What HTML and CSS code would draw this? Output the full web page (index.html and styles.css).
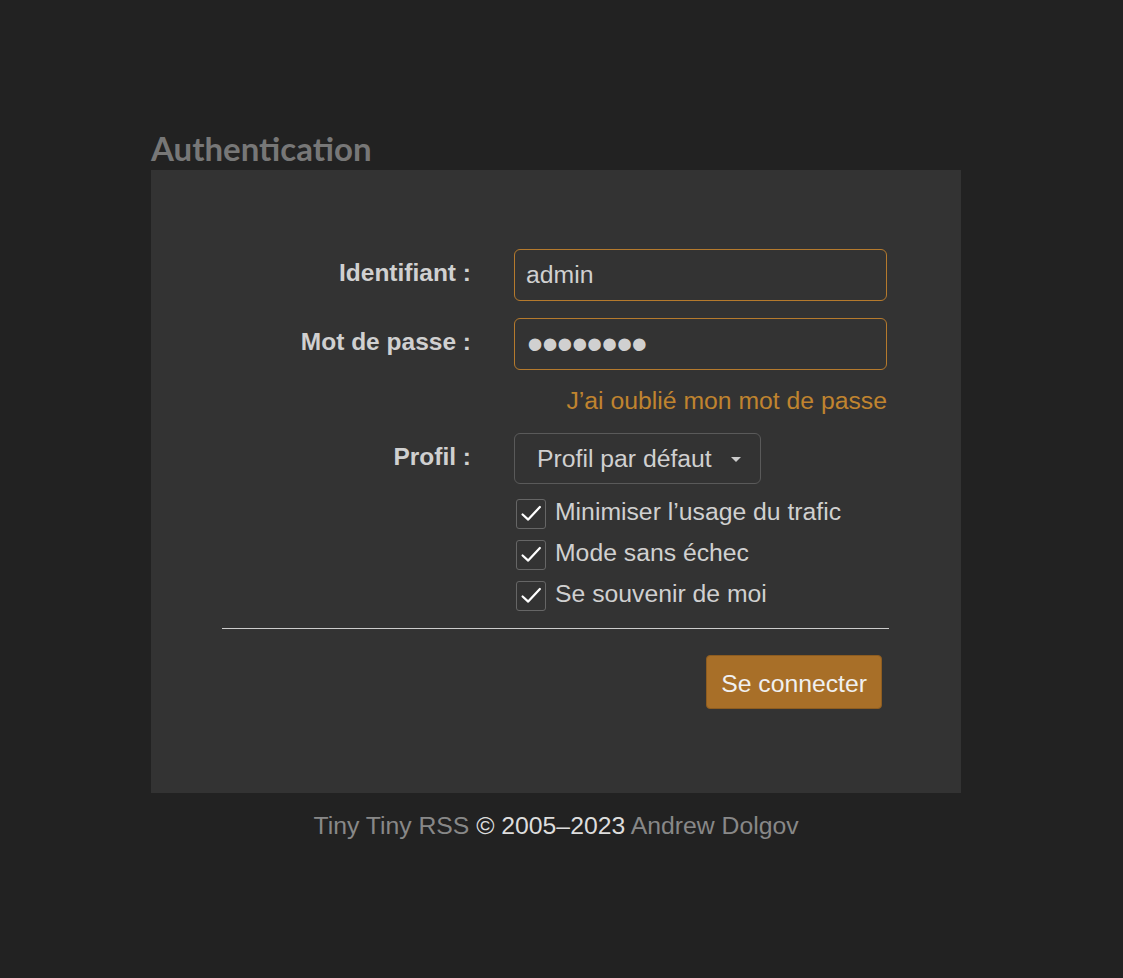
FILE: index.html
```html
<!DOCTYPE html>
<html lang="fr">
<head>
<meta charset="utf-8">
<title>Tiny Tiny RSS : Connexion</title>
<link rel="stylesheet" href="styles.css">
</head>
<body>
<div class="container">
  <h1 class="title">Authentication</h1>
  <div class="panel">
    <form class="login-form">
      <div class="row">
        <label class="label" for="login">Identifiant :</label>
        <input class="text-input" id="login" type="text" value="admin">
      </div>
      <div class="row row-pass">
        <label class="label" for="password">Mot de passe :</label>
        <input class="text-input password" id="password" type="password" value="password">
      </div>
      <div class="row row-link">
        <span></span>
        <a class="forgot" href="#">J’ai oublié mon mot de passe</a>
      </div>
      <div class="row row-profile">
        <label class="label">Profil :</label>
        <div class="select-wrap">
          <div class="select">
            <span>Profil par défaut</span>
            <svg class="caret" width="12" height="7" viewBox="0 0 12 7"><path d="M1 1 L6 6 L11 1 Z" fill="#cccccc"/></svg>
          </div>
        </div>
      </div>
      <div class="row row-checks">
        <span></span>
        <div class="checks">
          <label class="check">
            <span class="box"><svg width="30" height="30" viewBox="0 0 30 30"><path d="M6 15.5 L12 21 L24.5 7.5" fill="none" stroke="#ffffff" stroke-width="2.4" stroke-linecap="round" stroke-linejoin="round"/></svg></span>
            <span class="check-text">Minimiser l’usage du trafic</span>
          </label>
          <label class="check">
            <span class="box"><svg width="30" height="30" viewBox="0 0 30 30"><path d="M6 15.5 L12 21 L24.5 7.5" fill="none" stroke="#ffffff" stroke-width="2.4" stroke-linecap="round" stroke-linejoin="round"/></svg></span>
            <span class="check-text">Mode sans échec</span>
          </label>
          <label class="check">
            <span class="box"><svg width="30" height="30" viewBox="0 0 30 30"><path d="M6 15.5 L12 21 L24.5 7.5" fill="none" stroke="#ffffff" stroke-width="2.4" stroke-linecap="round" stroke-linejoin="round"/></svg></span>
            <span class="check-text">Se souvenir de moi</span>
          </label>
        </div>
      </div>
      <hr class="divider">
      <div class="actions">
        <button class="submit" type="button">Se connecter</button>
      </div>
    </form>
  </div>
  <div class="footer">
    <a class="footer-link" href="#">Tiny Tiny RSS</a>
    <span class="copy">© 2005–2023</span>
    <a class="footer-link" href="#">Andrew Dolgov</a>
  </div>
</div>
</body>
</html>
```

FILE: styles.css
```css
html, body {
  margin: 0;
  padding: 0;
  background: #222222;
}

body {
  font-family: "Liberation Sans", Arial, sans-serif;
  font-size: 24.75px;
  color: #cccccc;
}

.container {
  width: 810px;
  margin-left: 151px;
  padding-top: 130px;
}

.title {
  margin: 0 0 3px 0;
  font-family: Lato, "Open Sans", sans-serif;
  font-weight: 700;
  font-size: 33px;
  line-height: 37px;
  color: #777777;
}

.panel {
  background: #333333;
  padding: 79px 72px 84px 71px;
}

.login-form {
  display: flex;
  flex-direction: column;
}

.row {
  display: grid;
  grid-template-columns: 249px 373px;
  column-gap: 43px;
  align-items: start;
}

.row-pass { margin-top: 17px; }
.row-link { margin-top: 17px; }
.row-profile { margin-top: 18px; }
.row-checks { margin-top: 15px; }

.label {
  text-align: right;
  font-weight: 700;
  font-size: 24.5px;
  line-height: 28px;
  padding-top: 10px;
  color: #d0d0d0;
}

.text-input {
  box-sizing: border-box;
  width: 373px;
  height: 52px;
  margin: 0;
  padding: 0 11px;
  border: 1px solid #b57a2d;
  border-radius: 6px;
  background: #333333;
  color: #d0d0d0;
  font-family: "Liberation Sans", Arial, sans-serif;
  font-size: 24.75px;
  outline: none;
}

.text-input.password {
  font-size: 46px;
  letter-spacing: -1.2px;
  padding-left: 12px;
}

.forgot {
  justify-self: end;
  color: #c0842f;
  text-decoration: none;
  font-size: 24.75px;
  line-height: 28px;
}

.select-wrap {
  display: flex;
}

.select {
  box-sizing: border-box;
  height: 51px;
  display: flex;
  align-items: center;
  gap: 18px;
  padding: 0 18px 0 22px;
  border: 1px solid #5a5a5a;
  border-radius: 6px;
  color: #d0d0d0;
  font-size: 24.75px;
}

.caret {
  display: block;
  margin-top: 2px;
}

.checks {
  display: flex;
  flex-direction: column;
  gap: 11px;
}

.check {
  display: flex;
  align-items: center;
  gap: 9px;
  height: 30px;
  padding-left: 2px;
  color: #d0d0d0;
  font-size: 24.75px;
  line-height: 28px;
}

.check-text {
  padding-bottom: 5px;
}

.box {
  box-sizing: border-box;
  width: 30px;
  height: 30px;
  border: 1px solid #666666;
  border-radius: 3px;
  display: flex;
  align-items: center;
  justify-content: center;
}

.box svg {
  display: block;
}

.divider {
  margin: 17px 0 0 0;
  border: 0;
  height: 1px;
  background: #cccccc;
}

.actions {
  display: flex;
  justify-content: flex-end;
  margin-top: 26px;
  padding-right: 7px;
}

.submit {
  box-sizing: border-box;
  height: 54px;
  padding: 3px 14px 0 14px;
  background: #a86f28;
  border: 1px solid #8d5c20;
  border-radius: 4px;
  color: #f0f0f0;
  font-family: "Liberation Sans", Arial, sans-serif;
  font-size: 24.75px;
}

.footer {
  margin-top: 19px;
  text-align: center;
  font-size: 24.75px;
  line-height: 28px;
}

.footer-link {
  color: #888888;
  text-decoration: none;
}

.copy {
  color: #dddddd;
}
```
